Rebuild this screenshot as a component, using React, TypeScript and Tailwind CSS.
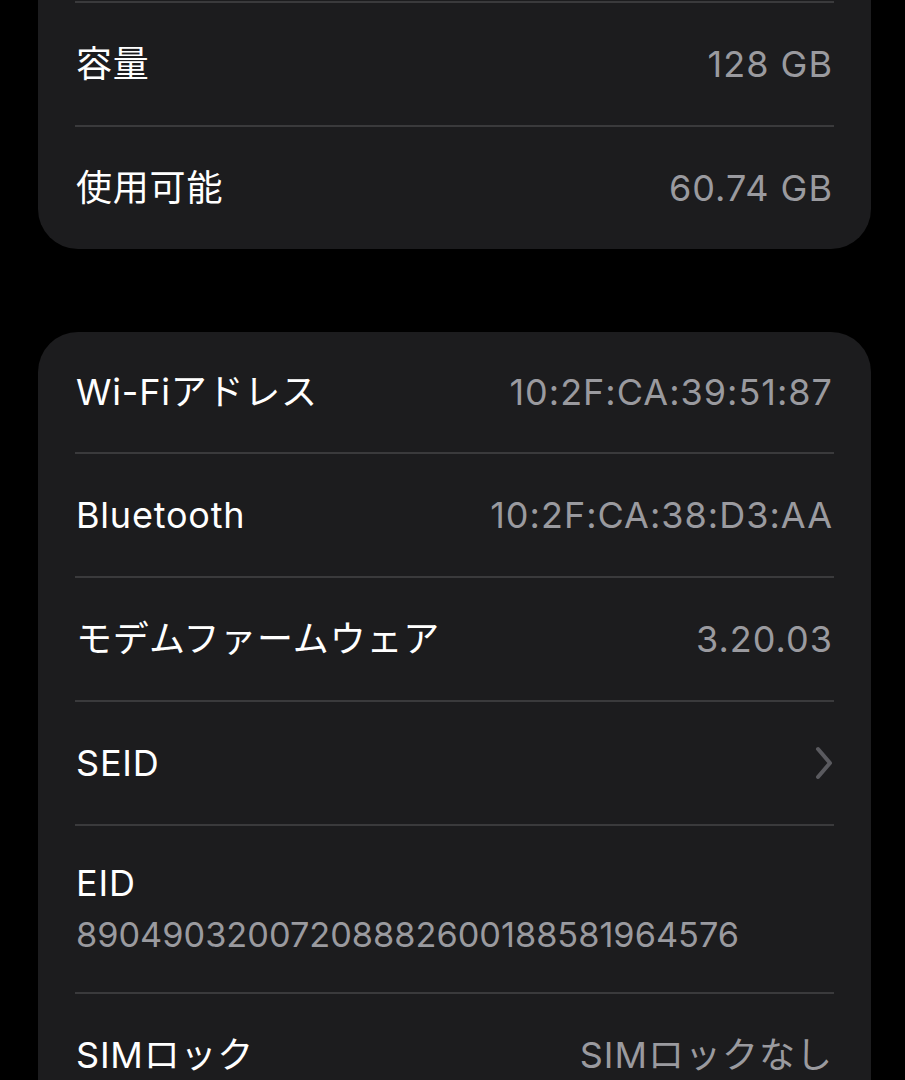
import React from "react";

const font = { fontFamily: '"Inter", "Noto Sans CJK JP", sans-serif' };

function Divider() {
  return <div className="ml-[37px] mr-[37px] h-[2px] bg-[#3a3a3c]" />;
}

function Row({ label, value, chevron, first }: { label: string; value?: string; chevron?: boolean; first?: boolean }) {
  return (
    <div className={`flex ${first ? "h-[120px]" : "h-[122px]"} items-center justify-between pl-[38px] pr-[38px]`}>
      <span className="text-[36px] leading-none tracking-[0.8px] text-white">{label}</span>
      {value && <span className="text-[36px] leading-none tracking-[1px] text-[#9a9a9f]">{value}</span>}
      {chevron && (
        <svg width="20" height="34" viewBox="0 0 20 34" className="mr-[-1px]">
          <path d="M4 3 L16 17 L4 31" fill="none" stroke="#5a5a5f" strokeWidth="4" strokeLinecap="round" strokeLinejoin="round" />
        </svg>
      )}
    </div>
  );
}

export default function App() {
  return (
    <div className="h-[1080px] w-[905px] overflow-hidden bg-black" style={font}>
      <div className="ml-[38px] mr-[34px] rounded-b-[40px] bg-[#1c1c1e]">
        <div className="h-[1px]" />
        <Divider />
        <Row label="容量" value="128 GB" />
        <Divider />
        <Row label="使用可能" value="60.74 GB" />
      </div>
      <div className="ml-[38px] mr-[34px] mt-[83px] rounded-[40px] bg-[#1c1c1e]">
        <Row label="Wi-Fiアドレス" value="10:2F:CA:39:51:87" first />
        <Divider />
        <Row label="Bluetooth" value="10:2F:CA:38:D3:AA" />
        <Divider />
        <Row label="モデムファームウェア" value="3.20.03" />
        <Divider />
        <Row label="SEID" chevron />
        <Divider />
        <div className="flex h-[166px] flex-col justify-center gap-[17px] pl-[38px] pr-[38px]">
          <span className="text-[36px] leading-none tracking-[0.8px] text-white">EID</span>
          <span className="text-[34.3px] leading-none text-[#9a9a9f]">89049032007208882600188581964576</span>
        </div>
        <Divider />
        <Row label="SIMロック" value="SIMロックなし" />
        <Divider />
        <Row label="" />
      </div>
    </div>
  );
}
